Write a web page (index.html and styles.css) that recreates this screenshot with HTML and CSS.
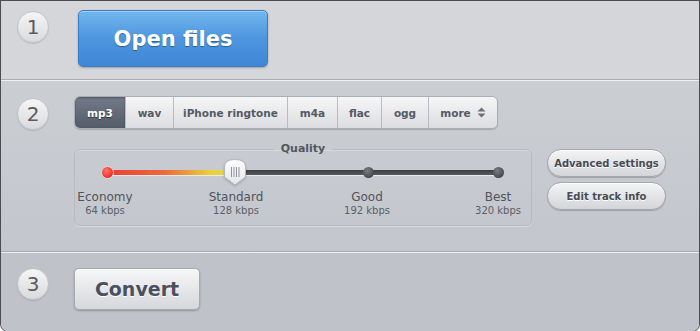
FILE: index.html
```html
<!DOCTYPE html>
<html lang="en">
<head>
    <meta charset="UTF-8">
    <title>Audio Converter</title>
    <link rel="stylesheet" href="styles.css">
</head>
<body>
    <div class="panel">
        <div class="step step-open">
            <div class="step-num">1</div>
            <button class="btn-open">Open files</button>
        </div>

        <div class="step step-format">
            <div class="step-num">2</div>
            <div class="format-body">
                <div class="tabs">
                    <span class="tab active tab-mp3">mp3</span>
                    <span class="tab tab-wav">wav</span>
                    <span class="tab tab-iphone">iPhone ringtone</span>
                    <span class="tab tab-m4a">m4a</span>
                    <span class="tab tab-flac">flac</span>
                    <span class="tab tab-ogg">ogg</span>
                    <span class="tab tab-more">more
                        <svg width="9" height="11" viewBox="0 0 9 11"><path d="M4.5 0.5 L8.5 4.5 H0.5 Z M4.5 10.5 L8.5 6.5 H0.5 Z" fill="#6a6f79"/></svg>
                    </span>
                </div>

                <div class="quality-row">
                    <fieldset class="quality">
                        <legend>Quality</legend>
                        <div class="track">
                            <div class="track-fill"></div>
                            <span class="dot dot-red"></span>
                            <span class="dot dot-grey dot-good"></span>
                            <span class="dot dot-grey dot-best"></span>
                            <svg class="handle" width="24" height="28" viewBox="0 0 24 28">
                                <defs>
                                    <linearGradient id="hg" x1="0" y1="0" x2="0" y2="1">
                                        <stop offset="0" stop-color="#ffffff"/>
                                        <stop offset="1" stop-color="#e4e5e8"/>
                                    </linearGradient>
                                </defs>
                                <path d="M1.5 9 Q1.5 1.5 12 1.5 Q22.5 1.5 22.5 9 V19 L12 27 L1.5 19 Z" fill="url(#hg)" stroke="#b3b6bc"/>
                                <path d="M8.5 9 V19 M11 9 V19 M13.5 9 V19 M16 9 V19" stroke="#8f939a" stroke-width="1"/>
                            </svg>
                        </div>
                        <div class="labels">
                            <div class="label"><div class="label-name">Economy</div><div class="label-rate">64 kbps</div></div>
                            <div class="label"><div class="label-name">Standard</div><div class="label-rate">128 kbps</div></div>
                            <div class="label"><div class="label-name">Good</div><div class="label-rate">192 kbps</div></div>
                            <div class="label"><div class="label-name">Best</div><div class="label-rate">320 kbps</div></div>
                        </div>
                    </fieldset>

                    <div class="side-buttons">
                        <button class="btn-pill">Advanced settings</button>
                        <button class="btn-pill">Edit track info</button>
                    </div>
                </div>
            </div>
        </div>

        <div class="step step-convert">
            <div class="step-num">3</div>
            <button class="btn-convert">Convert</button>
        </div>
    </div>
</body>
</html>
```

FILE: styles.css
```css
body {
    margin: 0;
    background: #ffffff;
    font-family: "DejaVu Sans", sans-serif;
}

.panel {
    width: 698px;
    height: 330px;
    border: 1px solid #4a4d52;
    border-bottom-color: #6a6d72;
    border-radius: 0 0 8px 8px;
    overflow: hidden;
    background: #c6cad0;
}

.step {
    display: flex;
    align-items: flex-start;
    border-bottom: 1px solid #a7abb2;
    box-shadow: 0 1px 0 #eef0f2;
    position: relative;
}

.step-num {
    width: 30px;
    height: 30px;
    margin: 0 25px 0 16px;
    border-radius: 50%;
    border: 1px solid #c2c4c8;
    background: linear-gradient(#f6f6f7, #d8dadd);
    box-shadow: 0 1px 1px rgba(0,0,0,0.12);
    color: #575b62;
    font-size: 20px;
    line-height: 30px;
    text-align: center;
    flex-shrink: 0;
}

/* step 1 */
.step-open {
    height: 79px;
    padding-top: 9px;
    box-sizing: border-box;
    background: #d4d6da;
}

.step-open .step-num {
    margin-top: 1px;
}

.btn-open {
    width: 190px;
    height: 57px;
    margin-left: 4px;
    border: 1px solid #3a7cc6;
    border-radius: 5px;
    background: linear-gradient(#72b7ee 0%, #4d96df 50%, #3f86d4 100%);
    box-shadow: inset 0 1px 0 rgba(255,255,255,0.35), 0 1px 2px rgba(0,0,0,0.25);
    color: #ffffff;
    font-family: "DejaVu Sans", sans-serif;
    font-weight: bold;
    font-size: 21px;
    text-shadow: 0 1px 1px rgba(0,0,0,0.35);
    padding: 0;
}

/* step 2 */
.step-format {
    height: 171px;
    padding-top: 15px;
    box-sizing: border-box;
    margin-top: 1px;
    background: linear-gradient(#cbced3, #c3c7cd);
}

.step-format .step-num {
    margin-top: 2px;
}

.format-body {
    display: flex;
    flex-direction: column;
    gap: 15px;
}

.tabs {
    display: flex;
    height: 31px;
    border: 1px solid #a9adb4;
    border-radius: 6px;
    overflow: hidden;
    box-shadow: 0 1px 1px rgba(0,0,0,0.18);
    align-self: flex-start;
}

.tab {
    display: flex;
    align-items: center;
    justify-content: center;
    gap: 6px;
    background: linear-gradient(#f6f6f7, #dcdde0);
    border-left: 1px solid #b8bbc1;
    color: #555a64;
    font-size: 10.5px;
    font-weight: bold;
}

.tab:first-child {
    border-left: none;
}

.tab-mp3 { width: 50px; }
.tab-wav { width: 47px; }
.tab-iphone { width: 113px; }
.tab-m4a { width: 49px; }
.tab-flac { width: 43px; }
.tab-ogg { width: 46px; }
.tab-more { width: 68px; }

.tab.active {
    background: linear-gradient(#737a88, #545b69);
    color: #ffffff;
    text-shadow: 0 1px 1px rgba(0,0,0,0.5);
    box-shadow: inset 0 1px 2px rgba(0,0,0,0.3);
}

.quality-row {
    display: flex;
    align-items: flex-start;
    gap: 15px;
}

.quality {
    width: 458px;
    height: 82px;
    box-sizing: border-box;
    margin: 0;
    padding: 0 4px;
    border: 1px solid #b6bac1;
    border-radius: 6px;
    box-shadow: inset 0 1px 0 rgba(255,255,255,0.25), 0 1px 0 rgba(255,255,255,0.35);
}

.quality legend {
    margin: 0 auto;
    padding: 0 7px;
    color: #525660;
    font-size: 11px;
    font-weight: bold;
    line-height: 10px;
}

.track {
    position: relative;
    margin: 16px 29px 0 28px;
    height: 5px;
    border-radius: 3px;
    background: linear-gradient(#3c3d40, #5a5b5f);
    box-shadow: 0 1px 0 rgba(255,255,255,0.6);
}

.track-fill {
    width: 128px;
    height: 100%;
    border-radius: 3px 0 0 3px;
    background: linear-gradient(90deg, #ee3b36 0%, #ec6a3a 45%, #e7cf3b 80%, #e6dc3f 100%);
}

.dot {
    position: absolute;
    top: -3px;
    width: 11px;
    height: 11px;
    border-radius: 50%;
    margin-left: -5px;
}

.dot-red {
    left: 0;
    top: -4px;
    width: 13px;
    height: 13px;
    margin-left: -6px;
    background: radial-gradient(circle at 40% 35%, #ff7a6a, #e8302a 70%);
    border: 1px solid #e9d7d4;
    box-sizing: border-box;
}

.dot-grey {
    background: radial-gradient(circle at 40% 35%, #7b7e83, #47494d 70%);
}

.dot-good {
    left: 66.8%;
}

.dot-best {
    left: 100%;
}

.handle {
    position: absolute;
    left: 128px;
    top: -12px;
    margin-left: -12px;
    filter: drop-shadow(0 1px 1px rgba(0,0,0,0.2));
}

.labels {
    display: flex;
    justify-content: space-between;
    margin: 15px -3px 0 -6px;
}

.label {
    width: 64px;
    text-align: center;
}

.label-name {
    color: #50545c;
    font-size: 12px;
    line-height: 14px;
}

.label-rate {
    color: #5b5f67;
    font-size: 10px;
    line-height: 13px;
}

.side-buttons {
    display: flex;
    flex-direction: column;
    gap: 5px;
    margin-top: 5px;
}

.btn-pill {
    width: 119px;
    height: 28px;
    padding: 0;
    border: 1px solid #a3a7ae;
    border-radius: 14px;
    background: linear-gradient(#f4f4f5, #d3d5d9);
    box-shadow: inset 0 1px 0 #ffffff, 0 1px 1px rgba(0,0,0,0.2);
    color: #474b54;
    font-family: "DejaVu Sans", sans-serif;
    font-size: 10px;
    font-weight: bold;
    text-shadow: 0 1px 0 #ffffff;
}

/* step 3 */
.step-convert {
    height: 78px;
    margin-top: 1px;
    padding-top: 15px;
    box-sizing: border-box;
    border-bottom: none;
    box-shadow: none;
    background: #bfc3c9;
}

.btn-convert {
    width: 126px;
    height: 42px;
    padding: 0;
    border: 1px solid #a6aab1;
    border-radius: 5px;
    background: linear-gradient(#f7f7f8, #d5d7da);
    box-shadow: inset 0 1px 0 #ffffff, 0 1px 2px rgba(0,0,0,0.25);
    color: #4b5060;
    font-family: "DejaVu Sans", sans-serif;
    font-size: 19px;
    font-weight: bold;
    text-shadow: 0 1px 0 #ffffff;
}
```
